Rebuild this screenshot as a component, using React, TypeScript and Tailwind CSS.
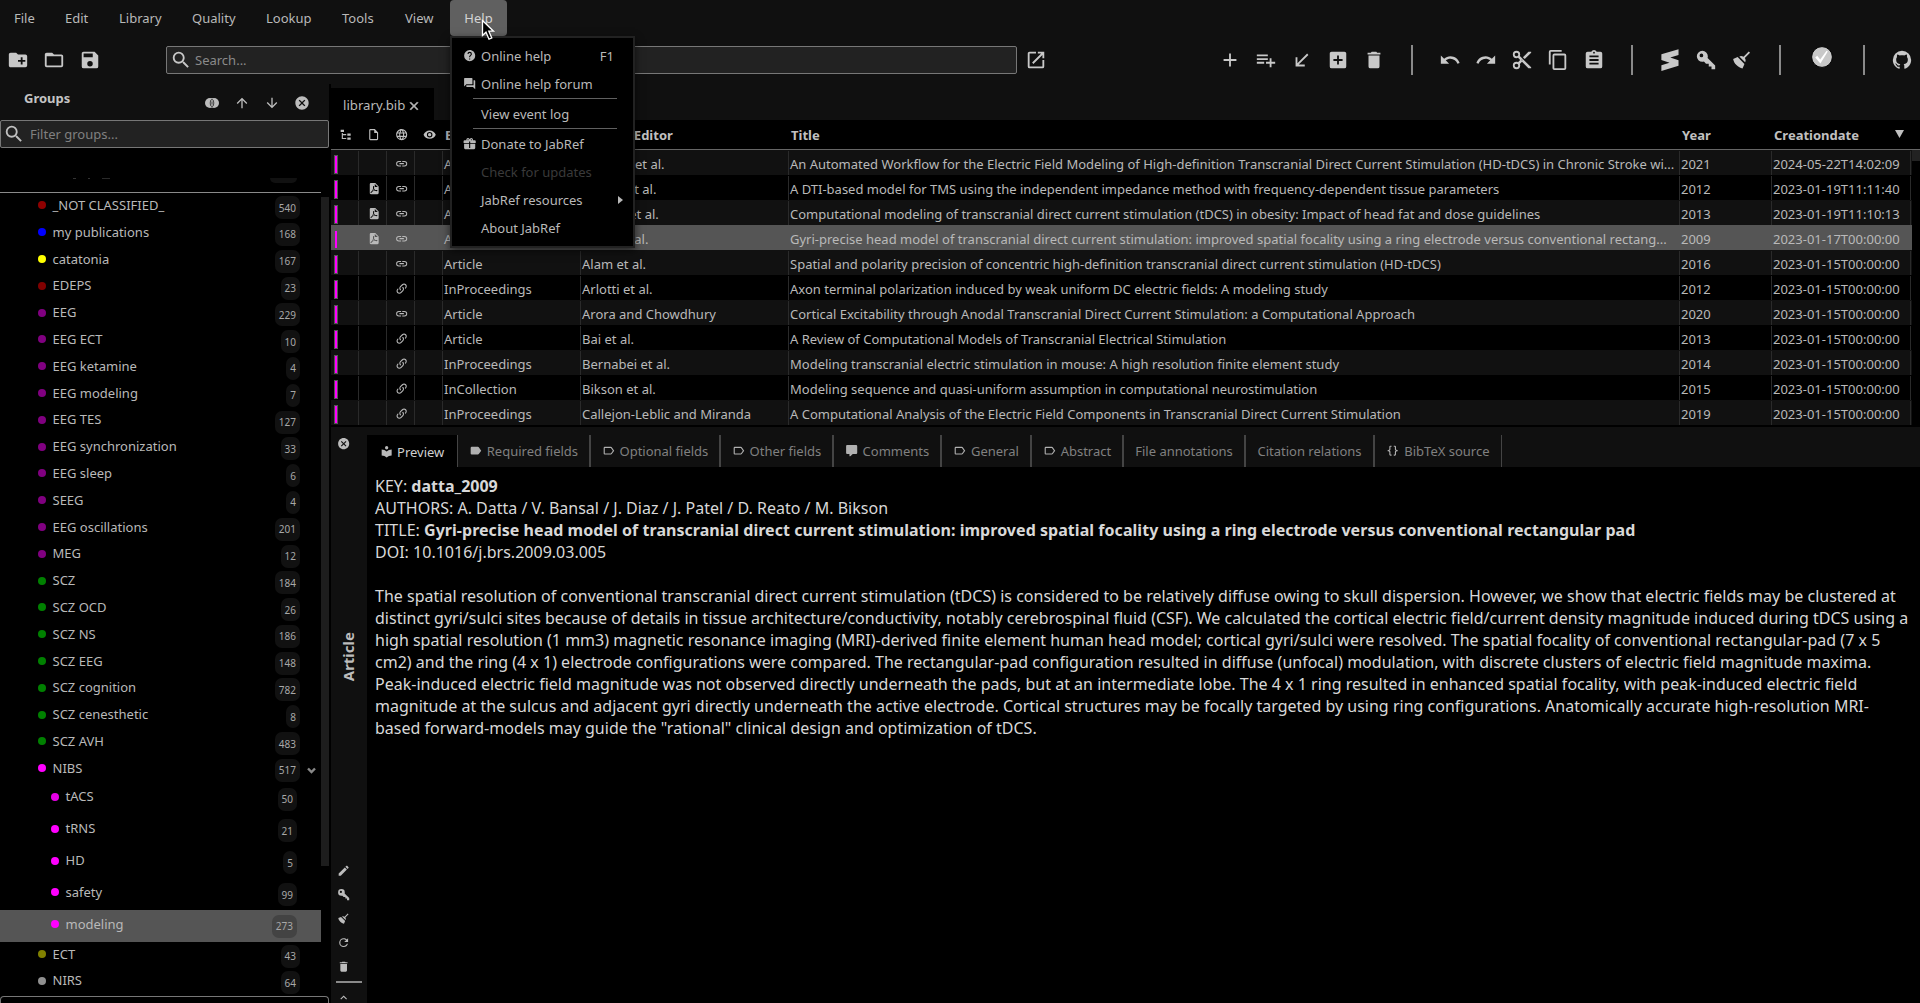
import React from "react";

const P = {
  folderPlus: "M10,4L12,6H20A2,2 0 0,1 22,8V18A2,2 0 0,1 20,20H4C2.89,20 2,19.1 2,18V6C2,4.89 2.89,4 4,4H10M15,9V12H12V14H15V17H17V14H20V12H17V9H15Z",
  folder: "M20,18H4V8H20M20,6H12L10,4H4C2.89,4 2,4.89 2,6V18A2,2 0 0,0 4,20H20A2,2 0 0,0 22,18V8C22,6.89 21.1,6 20,6Z",
  save: "M15,9H5V5H15M12,19A3,3 0 0,1 9,16A3,3 0 0,1 12,13A3,3 0 0,1 15,16A3,3 0 0,1 12,19M17,3H5C3.89,3 3,3.9 3,5V19A2,2 0 0,0 5,21H19A2,2 0 0,0 21,19V7L17,3Z",
  magnify: "M9.5,3A6.5,6.5 0 0,1 16,9.5C16,11.11 15.41,12.59 14.44,13.73L14.71,14H15.5L20.5,19L19,20.5L14,15.5V14.71L13.73,14.44C12.59,15.41 11.11,16 9.5,16A6.5,6.5 0 0,1 3,9.5A6.5,6.5 0 0,1 9.5,3M9.5,5C7,5 5,7 5,9.5C5,12 7,14 9.5,14C12,14 14,12 14,9.5C14,7 12,5 9.5,5Z",
  openNew: "M14,3V5H17.59L7.76,14.83L9.17,16.24L19,6.41V10H21V3M19,19H5V5H12V3H5C3.89,3 3,3.9 3,5V19A2,2 0 0,0 5,21H19A2,2 0 0,0 21,19V12H19V19Z",
  plus: "M19,13H13V19H11V13H5V11H11V5H13V11H19V13Z",
  playlistPlus: "M2,16H10V14H2M18,14V10H16V14H12V16H16V20H18V16H22V14M14,6H2V8H14M14,10H2V12H14V10Z",
  arrowBL: "M19,6.41L17.59,5L7,15.59V9H5V19H15V17H8.41L19,6.41Z",
  plusBox: "M17,13H13V17H11V13H7V11H11V7H13V11H17M19,3H5C3.89,3 3,3.89 3,5V19A2,2 0 0,0 5,21H19A2,2 0 0,0 21,19V5C21,3.89 20.1,3 19,3Z",
  trash: "M19,4H15.5L14.5,3H9.5L8.5,4H5V6H19M6,19A2,2 0 0,0 8,21H16A2,2 0 0,0 18,19V7H6V19Z",
  undo: "M12.5,8C9.85,8 7.45,9 5.6,10.6L2,7V16H11L7.38,12.38C8.77,11.22 10.54,10.5 12.5,10.5C16.04,10.5 19.05,12.81 20.1,16L22.47,15.22C21.08,11.03 17.15,8 12.5,8Z",
  redo: "M18.4,10.6C16.55,9 14.15,8 11.5,8C6.85,8 2.92,11.03 1.54,15.22L3.9,16C4.95,12.81 7.95,10.5 11.5,10.5C13.45,10.5 15.23,11.22 16.62,12.38L13,16H22V7L18.4,10.6Z",
  cut: "M19,3L13,9L15,11L22,4V3M12,12.5A0.5,0.5 0 0,1 11.5,12A0.5,0.5 0 0,1 12,11.5A0.5,0.5 0 0,1 12.5,12A0.5,0.5 0 0,1 12,12.5M6,20A2,2 0 0,1 4,18C4,16.89 4.9,16 6,16A2,2 0 0,1 8,18C8,19.11 7.1,20 6,20M6,8A2,2 0 0,1 4,6C4,4.89 4.9,4 6,4A2,2 0 0,1 8,6C8,7.11 7.1,8 6,8M9.64,7.64C9.87,7.14 10,6.59 10,6A4,4 0 0,0 6,2A4,4 0 0,0 2,6A4,4 0 0,0 6,10C6.59,10 7.14,9.87 7.64,9.64L10,12L7.64,14.36C7.14,14.13 6.59,14 6,14A4,4 0 0,0 2,18A4,4 0 0,0 6,22A4,4 0 0,0 10,18C10,17.41 9.87,16.86 9.64,16.36L12,14L19,21H22V20L9.64,7.64Z",
  copy: "M19,21H8V7H19M19,5H8A2,2 0 0,0 6,7V21A2,2 0 0,0 8,23H19A2,2 0 0,0 21,21V7A2,2 0 0,0 19,5M16,1H4A2,2 0 0,0 2,3V17H4V3H16V1Z",
  clipboard: "M17,9H7V7H17M17,13H7V11H17M17,17H7V15H17M12,3A1,1 0 0,1 13,4A1,1 0 0,1 12,5A1,1 0 0,1 11,4A1,1 0 0,1 12,3M19,3H14.82C14.4,1.84 13.3,1 12,1C10.7,1 9.6,1.84 9.18,3H5A2,2 0 0,0 3,5V19A2,2 0 0,0 5,21H19A2,2 0 0,0 21,19V5A2,2 0 0,0 19,3Z",
  sheets: "M21.3,0.2L2.6,5.6V11.9L11.5,15L2.6,17.6V24L21.3,18.4V12.2L12.3,9.2L21.3,6.6Z",
  key: "M22,18V22H18V19H15V16H12L9.74,13.74C9.19,13.91 8.61,14 8,14A6,6 0 0,1 2,8A6,6 0 0,1 8,2A6,6 0 0,1 14,8C14,8.61 13.91,9.19 13.74,9.74L22,18M7,5A2,2 0 0,0 5,7A2,2 0 0,0 7,9A2,2 0 0,0 9,7A2,2 0 0,0 7,5Z",
  broom: "M19.36,2.72L20.78,4.14L15.06,9.85C16.13,11.39 16.28,13.24 15.38,14.44L9.06,8.12C10.26,7.22 12.11,7.37 13.65,8.44L19.36,2.72M5.93,17.57C3.92,15.56 2.69,13.16 2.35,10.92L7.23,8.83L14.67,16.27L12.58,21.15C10.34,20.81 7.94,19.58 5.93,17.57Z",
  github: "M12,2A10,10 0 0,0 2,12C2,16.42 4.87,20.17 8.84,21.5C9.34,21.58 9.5,21.27 9.5,21C9.5,20.77 9.5,20.14 9.5,19.31C6.73,19.91 6.14,17.97 6.14,17.97C5.68,16.81 5.03,16.5 5.03,16.5C4.12,15.88 5.1,15.9 5.1,15.9C6.1,15.97 6.63,16.93 6.63,16.93C7.5,18.45 8.97,18 9.54,17.76C9.63,17.11 9.89,16.67 10.17,16.42C7.95,16.17 5.62,15.31 5.62,11.5C5.62,10.39 6,9.5 6.65,8.79C6.55,8.54 6.2,7.5 6.75,6.15C6.75,6.15 7.59,5.88 9.5,7.17C10.29,6.95 11.15,6.84 12,6.84C12.85,6.84 13.71,6.95 14.5,7.17C16.41,5.88 17.25,6.15 17.25,6.15C17.8,7.5 17.45,8.54 17.35,8.79C18,9.5 18.38,10.39 18.38,11.5C18.38,15.32 16.04,16.16 13.81,16.41C14.17,16.72 14.5,17.33 14.5,18.26C14.5,19.6 14.5,20.68 14.5,21C14.5,21.27 14.66,21.59 15.17,21.5C19.14,20.16 22,16.42 22,12A10,10 0 0,0 12,2Z",
  closeCircle: "M12,2C17.53,2 22,6.47 22,12C22,17.53 17.53,22 12,22C6.47,22 2,17.53 2,12C2,6.47 6.47,2 12,2M15.59,7L12,10.59L8.41,7L7,8.41L10.59,12L7,15.59L8.41,17L12,13.41L15.59,17L17,15.59L13.41,12L17,8.41L15.59,7Z",
  up: "M13,20H11V8L5.5,13.5L4.08,12.08L12,4.16L19.92,12.08L18.5,13.5L13,8V20Z",
  down: "M11,4H13V16L18.5,10.5L19.92,11.92L12,19.84L4.08,11.92L5.5,10.5L11,16V4Z",
  close: "M19,6.41L17.59,5L12,10.59L6.41,5L5,6.41L10.59,12L5,17.59L6.41,19L12,13.41L17.59,19L19,17.59L13.41,12L19,6.41Z",
  tree: "M3,3H9V7H3V3M15,10H21V14H15V10M15,17H21V21H15V17M13,13H7V18H13V20H5V9H7V11H13V13Z",
  file: "M14,2H6A2,2 0 0,0 4,4V20A2,2 0 0,0 6,22H18A2,2 0 0,0 20,20V8L14,2M18,20H6V4H13V9H18V20Z",
  web: "M16.36,14C16.44,13.34 16.5,12.68 16.5,12C16.5,11.32 16.44,10.66 16.36,10H19.74C19.9,10.64 20,11.31 20,12C20,12.69 19.9,13.36 19.74,14M14.59,19.56C15.19,18.45 15.65,17.25 15.97,16H18.92C17.96,17.65 16.43,18.93 14.59,19.56M14.34,14H9.66C9.56,13.34 9.5,12.68 9.5,12C9.5,11.32 9.56,10.65 9.66,10H14.34C14.43,10.65 14.5,11.32 14.5,12C14.5,12.68 14.43,13.34 14.34,14M12,19.96C11.17,18.76 10.5,17.43 10.09,16H13.91C13.5,17.43 12.83,18.76 12,19.96M8,8H5.08C6.03,6.34 7.57,5.06 9.4,4.44C8.8,5.55 8.35,6.75 8,8M5.08,16H8C8.35,17.25 8.8,18.45 9.4,19.56C7.57,18.93 6.03,17.65 5.08,16M4.26,14C4.1,13.36 4,12.69 4,12C4,11.31 4.1,10.64 4.26,10H7.64C7.56,10.66 7.5,11.32 7.5,12C7.5,12.68 7.56,13.34 7.64,14M12,4.03C12.83,5.23 13.5,6.57 13.91,8H10.09C10.5,6.57 11.17,5.23 12,4.03M18.92,8H15.97C15.65,6.75 15.19,5.55 14.59,4.44C16.43,5.07 17.96,6.34 18.92,8M12,2C6.47,2 2,6.5 2,12A10,10 0 0,0 12,22A10,10 0 0,0 22,12A10,10 0 0,0 12,2Z",
  eye: "M12,9A3,3 0 0,0 9,12A3,3 0 0,0 12,15A3,3 0 0,0 15,12A3,3 0 0,0 12,9M12,17A5,5 0 0,1 7,12A5,5 0 0,1 12,7A5,5 0 0,1 17,12A5,5 0 0,1 12,17M12,4.5C7,4.5 2.73,7.61 1,12C2.73,16.39 7,19.5 12,19.5C17,19.5 21.27,16.39 23,12C21.27,7.61 17,4.5 12,4.5Z",
  linkVariant: "M10.59,13.41C11,13.8 11,14.44 10.59,14.83C10.2,15.22 9.56,15.22 9.17,14.83C7.22,12.88 7.22,9.71 9.17,7.76V7.76L12.71,4.22C14.66,2.27 17.83,2.27 19.78,4.22C21.73,6.17 21.73,9.34 19.78,11.29L18.29,12.78C18.3,11.96 18.17,11.14 17.89,10.36L18.36,9.88C19.54,8.71 19.54,6.81 18.36,5.64C17.19,4.46 15.29,4.46 14.12,5.64L10.59,9.17C9.41,10.34 9.41,12.24 10.59,13.41M13.41,9.17C13.8,8.78 14.44,8.78 14.83,9.17C16.78,11.12 16.78,14.29 14.83,16.24V16.24L11.29,19.78C9.34,21.73 6.17,21.73 4.22,19.78C2.27,17.83 2.27,14.66 4.22,12.71L5.71,11.22C5.7,12.04 5.83,12.86 6.11,13.65L5.64,14.12C4.46,15.29 4.46,17.19 5.64,18.36C6.81,19.54 8.71,19.54 9.88,18.36L13.41,14.83C14.59,13.66 14.59,11.76 13.41,10.59C13,10.2 13,9.56 13.41,9.17Z",
  link: "M3.9,12C3.9,10.29 5.29,8.9 7,8.9H11V7H7A5,5 0 0,0 2,12A5,5 0 0,0 7,17H11V15.1H7C5.29,15.1 3.9,13.71 3.9,12M8,13H16V11H8V13M17,7H13V8.9H17C18.71,8.9 20.1,10.29 20.1,12C20.1,13.71 18.71,15.1 17,15.1H13V17H17A5,5 0 0,0 22,12A5,5 0 0,0 17,7Z",
  pdf: "M14,9H19.5L14,3.5V9M7,2H15L21,8V20A2,2 0 0,1 19,22H7C5.89,22 5,21.1 5,20V4A2,2 0 0,1 7,2M11.93,12.44C12.34,13.34 12.86,14.08 13.46,14.59L13.87,14.91C13,15.07 11.8,15.35 10.53,15.84V15.84L10.42,15.88L10.92,14.84C11.37,13.97 11.7,13.18 11.93,12.44M18.41,16.25C18.59,16.07 18.68,15.84 18.69,15.59C18.72,15.39 18.67,15.2 18.57,15.04C18.28,14.57 17.53,14.35 16.29,14.35L15,14.42L14.13,13.84C13.5,13.32 12.93,12.41 12.53,11.28L12.57,11.14C12.9,9.81 13.21,8.2 12.55,7.54C12.39,7.38 12.17,7.3 11.94,7.3H11.7C11.33,7.3 11,7.69 10.91,8.07C10.54,9.4 10.76,10.13 11.13,11.34V11.35C10.88,12.23 10.56,13.25 10.05,14.28L9.09,16.08L8.2,16.57C7,17.32 6.43,18.16 6.32,18.69C6.28,18.88 6.3,19.05 6.37,19.23L6.4,19.28L6.88,19.59L7.32,19.7C8.13,19.7 9.05,18.75 10.29,16.63L10.47,16.56C11.5,16.23 12.78,16 14.5,15.81C15.53,16.32 16.74,16.55 17.5,16.55C17.94,16.55 18.24,16.44 18.41,16.25Z",
  help: "M15.07,11.25L14.17,12.17C13.45,12.89 13,13.5 13,15H11V14.5C11,13.39 11.45,12.39 12.17,11.67L13.41,10.41C13.78,10.05 14,9.55 14,9C14,7.89 13.1,7 12,7A2,2 0 0,0 10,9H8A4,4 0 0,1 12,5A4,4 0 0,1 16,9C16,9.88 15.64,10.67 15.07,11.25M13,19H11V17H13M12,2A10,10 0 0,0 2,12A10,10 0 0,0 12,22A10,10 0 0,0 22,12C22,6.47 17.5,2 12,2Z",
  forum: "M17,12V3A1,1 0 0,0 16,2H3A1,1 0 0,0 2,3V17L6,13H16A1,1 0 0,0 17,12M21,6H19V15H6V17A1,1 0 0,0 7,18H18L22,22V7A1,1 0 0,0 21,6Z",
  gift: "M9.06,1.93C7.17,1.92 5.33,3.74 6.17,6H3A2,2 0 0,0 1,8V10A1,1 0 0,0 2,11H11V8H13V11H22A1,1 0 0,0 23,10V8A2,2 0 0,0 21,6H17.83C19,2.73 14.6,0.42 12.57,3.24L12,4L11.43,3.22C10.8,2.33 9.93,1.94 9.06,1.93M9,4C9.89,4 10.34,5.08 9.71,5.71C9.08,6.34 8,5.89 8,5A1,1 0 0,1 9,4M15,4C15.89,4 16.34,5.08 15.71,5.71C15.08,6.34 14,5.89 14,5A1,1 0 0,1 15,4M2,12V20A2,2 0 0,0 4,22H20A2,2 0 0,0 22,20V12H13V20H11V12H2Z",
  label: "M17.63,5.84C17.27,5.33 16.67,5 16,5H5A2,2 0 0,0 3,7V17A2,2 0 0,0 5,19H16C16.67,19 17.27,18.66 17.63,18.15L22,12L17.63,5.84Z",
  labelOutline: "M16,17H5V7H16L19.55,12M17.63,5.84C17.27,5.33 16.67,5 16,5H5A2,2 0 0,0 3,7V17A2,2 0 0,0 5,19H16C16.67,19 17.27,18.66 17.63,18.15L22,12L17.63,5.84Z",
  comment: "M9,22A1,1 0 0,1 8,21V18H4A2,2 0 0,1 2,16V4C2,2.89 2.9,2 4,2H20A2,2 0 0,1 22,4V16A2,2 0 0,1 20,18H13.9L10.2,21.71C10,21.9 9.75,22 9.5,22H9Z",
  reader: "M12,8A3,3 0 0,0 15,5A3,3 0 0,0 12,2A3,3 0 0,0 9,5A3,3 0 0,0 12,8M12,11.54C9.64,9.35 6.5,8 3,8V19C6.5,19 9.64,20.35 12,22.54C14.36,20.35 17.5,19 21,19V8C17.5,8 14.36,9.35 12,11.54Z",
  braces: "M8,3A2,2 0 0,0 6,5V9A2,2 0 0,1 4,11H3V13H4A2,2 0 0,1 6,15V19A2,2 0 0,0 8,21H10V19H8V14A2,2 0 0,0 6,12A2,2 0 0,0 8,10V5H10V3M16,3A2,2 0 0,1 18,5V9A2,2 0 0,0 20,11H21V13H20A2,2 0 0,0 18,15V19A2,2 0 0,1 16,21H14V19H16V14A2,2 0 0,1 18,12A2,2 0 0,1 16,10V5H14V3H16Z",
  pencil: "M20.71,7.04C21.1,6.65 21.1,6 20.71,5.63L18.37,3.29C18,2.9 17.35,2.9 16.96,3.29L15.12,5.12L18.87,8.87M3,17.25V21H6.75L17.81,9.93L14.06,6.18L3,17.25Z",
  refresh: "M17.65,6.35C16.2,4.9 14.21,4 12,4A8,8 0 0,0 4,12A8,8 0 0,0 12,20C15.73,20 18.84,17.45 19.73,14H17.65C16.83,16.33 14.61,18 12,18A6,6 0 0,1 6,12A6,6 0 0,1 12,6C13.66,6 15.14,6.69 16.22,7.78L13,11H20V4L17.65,6.35Z",
  chevronUp: "M7.41,15.41L12,10.83L16.59,15.41L18,14L12,8L6,14L7.41,15.41Z",
};

type IconName = keyof typeof P;

function Icon({ n, s = 22, className = "" }: { n: IconName; s?: number; className?: string }) {
  return (
    <svg width={s} height={s} viewBox="0 0 24 24" className={"shrink-0 fill-current " + className}>
      <path d={P[n]} />
    </svg>
  );
}

const menus: { t: string; w: string }[] = [
  { t: "File", w: "w-[51px]" },
  { t: "Edit", w: "w-[54px]" },
  { t: "Library", w: "w-[73px]" },
  { t: "Quality", w: "w-[74px]" },
  { t: "Lookup", w: "w-[76px]" },
  { t: "Tools", w: "w-[63px]" },
  { t: "View", w: "w-[59px]" },
];

function MenuBar() {
  return (
    <nav className="flex h-9 shrink-0 text-[#b9b9b9]">
      {menus.map((m) => (
        <div key={m.t} className={"flex h-9 items-center pl-3.5 " + m.w}>{m.t}</div>
      ))}
      <div className="relative flex h-9 w-[57px] items-center justify-center rounded-[4px] bg-[#606060] text-[#d4d4d4]">
        Help
        <HelpMenu />
        <svg width="15" height="22" viewBox="0 0 15 22" className="absolute top-[19px] left-[31px] z-20">
          <path d="M1.5 1.5V16.5L5 13.2L8 20.2L10.8 19L7.8 12.2H12.5Z" fill="#000" stroke="#fff" strokeWidth="1.3" />
        </svg>
      </div>
    </nav>
  );
}

function MenuRow({ icon, label, extra, disabled }: { icon?: IconName; label: string; extra?: React.ReactNode; disabled?: boolean }) {
  return (
    <div className={"flex h-7 items-center " + (disabled ? "text-[#3a3a3a]" : "text-[#b9b9b9]")}>
      <span className="flex w-[29px] justify-end pr-[5px]">{icon && <Icon n={icon} s={13.33} />}</span>
      <span className="flex-1 whitespace-nowrap">{label}</span>
      {extra}
    </div>
  );
}

function HelpMenu() {
  const sep = <div className="mr-[16px] ml-[21px] flex h-[2px]"><div className="h-px w-full bg-[#606060]" /></div>;
  return (
    <div className="absolute top-9 left-0 z-10 h-[212px] w-[185px] border-2 border-[#222] bg-black pt-1 shadow-[0_3px_8px_rgba(0,0,0,0.6)]">
      <MenuRow icon="help" label="Online help" extra={<span className="mr-[19px]">F1</span>} />
      <MenuRow icon="forum" label="Online help forum" />
      {sep}
      <MenuRow label="View event log" />
      {sep}
      <MenuRow icon="gift" label="Donate to JabRef" />
      <MenuRow label="Check for updates" disabled />
      <MenuRow
        label="JabRef resources"
        extra={<svg width="5" height="8" viewBox="0 0 5 8" className="mr-[10px] fill-current"><path d="M0 0L5 4L0 8Z" /></svg>}
      />
      <MenuRow label="About JabRef" />
    </div>
  );
}

function Cell({ children }: { children: React.ReactNode }) {
  return <div className="flex w-9 shrink-0 justify-center">{children}</div>;
}

function Divider() {
  return <div className="h-[30px] w-[2px] shrink-0 bg-[#8a8a8a]" />;
}

function Toolbar() {
  return (
    <div className="flex h-12 shrink-0 items-center text-[#c8c8c8]">
      <Cell><Icon n="folderPlus" /></Cell>
      <Cell><Icon n="folder" /></Cell>
      <Cell><Icon n="save" /></Cell>
      <div className="ml-[58px] flex h-7 w-[852px] items-center rounded-[2px] border border-[#777] bg-[#222] pl-[3px]">
        <Icon n="magnify" />
        <span className="ml-[3px] text-[#8a8a8a]">Search...</span>
      </div>
      <div className="ml-px flex w-9 justify-center"><Icon n="openNew" /></div>
      <div className="ml-[158px] flex items-center">
        <Cell><Icon n="plus" /></Cell>
        <Cell><Icon n="playlistPlus" /></Cell>
        <Cell><Icon n="arrowBL" /></Cell>
        <Cell><Icon n="plusBox" /></Cell>
        <Cell><Icon n="trash" /></Cell>
      </div>
      <div className="ml-[19px]"><Divider /></div>
      <div className="ml-[19px] flex items-center">
        <Cell><Icon n="undo" /></Cell>
        <Cell><Icon n="redo" /></Cell>
        <Cell><Icon n="cut" /></Cell>
        <Cell><Icon n="copy" /></Cell>
        <Cell><Icon n="clipboard" /></Cell>
      </div>
      <div className="ml-[19px]"><Divider /></div>
      <div className="ml-[19px] flex items-center">
        <Cell><Icon n="sheets" /></Cell>
        <Cell><Icon n="key" /></Cell>
        <Cell><Icon n="broom" /></Cell>
      </div>
      <div className="ml-[19px]"><Divider /></div>
      <div className="ml-[30px] mb-[6px]">
        <svg width="22" height="22" viewBox="0 0 22 22">
          <circle cx="11" cy="11" r="10.4" fill="#c8c8c8" stroke="#000" />
          <path d="M4.2 11.6L6.2 9.8L9.2 13.4L15.6 4.8L16.8 5.6L9.4 17.4Z" fill="#fff" />
        </svg>
      </div>
      <div className="ml-[30px]"><Divider /></div>
      <div className="ml-[19px]"><Cell><Icon n="github" /></Cell></div>
    </div>
  );
}

type G = { n: string; c: string; dot: string };
const red = "bg-[#8f0000]", purple = "bg-[#800080]", green = "bg-[#008000]", mag = "bg-[#ff00ff]";
const groups: G[] = [
  { n: "_NOT CLASSIFIED_", c: "540", dot: red },
  { n: "my publications", c: "168", dot: "bg-[#0000ff]" },
  { n: "catatonia", c: "167", dot: "bg-[#ffff00]" },
  { n: "EDEPS", c: "23", dot: "bg-[#800000]" },
  { n: "EEG", c: "229", dot: purple },
  { n: "EEG ECT", c: "10", dot: purple },
  { n: "EEG ketamine", c: "4", dot: purple },
  { n: "EEG modeling", c: "7", dot: purple },
  { n: "EEG TES", c: "127", dot: purple },
  { n: "EEG synchronization", c: "33", dot: purple },
  { n: "EEG sleep", c: "6", dot: purple },
  { n: "SEEG", c: "4", dot: purple },
  { n: "EEG oscillations", c: "201", dot: purple },
  { n: "MEG", c: "12", dot: purple },
  { n: "SCZ", c: "184", dot: green },
  { n: "SCZ OCD", c: "26", dot: green },
  { n: "SCZ NS", c: "186", dot: green },
  { n: "SCZ EEG", c: "148", dot: green },
  { n: "SCZ cognition", c: "782", dot: green },
  { n: "SCZ cenesthetic", c: "8", dot: green },
  { n: "SCZ AVH", c: "483", dot: green },
  { n: "NIBS", c: "517", dot: mag },
];
const children: G[] = [
  { n: "tACS", c: "50", dot: "bg-[#e600e6]" },
  { n: "tRNS", c: "21", dot: mag },
  { n: "HD", c: "5", dot: mag },
  { n: "safety", c: "99", dot: mag },
  { n: "modeling", c: "273", dot: mag },
];
const tail: G[] = [
  { n: "ECT", c: "43", dot: "bg-[#808000]" },
  { n: "NIRS", c: "64", dot: "bg-[#909090]" },
];

function GroupRow({ g, child, selected }: { g: G; child?: boolean; selected?: boolean }) {
  return (
    <div
      className={
        "flex shrink-0 items-center " +
        (child ? "h-[31.8px] pl-[50.5px] pr-6 " : "h-[26.8px] pl-[37.5px] pr-[21px] ") +
        (selected ? "bg-[#555]" : "")
      }
    >
      <span className={"size-2 shrink-0 rounded-full " + (child ? "mb-[3px] " : "mb-[2px] ") + g.dot} />
      <span className={"ml-[7px] flex-1 whitespace-nowrap text-[#b9b9b9] " + (child ? "mb-[4px]" : "mb-[2.6px]")}>{g.n}</span>
      <span className={"flex h-[23px] items-center rounded-[7px] px-1 text-[10px] text-[#a8a8a8] " + (child ? "mt-[1.5px] " : "mt-[2.5px] ") + (selected ? "bg-[#434343]" : "bg-[#111]")}>{g.c}</span>
      {g.n === "NIBS" && (
        <svg width="9" height="7" viewBox="0 0 9 7" className="mt-[3px] mr-[-16px] ml-[7px]"><path d="M1 1.5L4.5 5L8 1.5" fill="none" stroke="#888" strokeWidth="2.4" /></svg>
      )}
    </div>
  );
}

function GroupsPanel() {
  return (
    <aside className="flex w-[329px] shrink-0 flex-col">
      <div className="flex h-9 shrink-0 items-center pl-6">
        <span className="mb-[9px] w-[173px] font-bold text-[#c4c4c4]">Groups</span>
        <div className="mt-[2px] flex text-[#bcbcbc]">
          <div className="flex w-[30px] items-center justify-center">
            <svg width="14" height="10" viewBox="0 0 14 10">
              <circle cx="5" cy="5" r="5" fill="#bcbcbc" />
              <circle cx="9" cy="5" r="5" fill="#bcbcbc" />
              <ellipse cx="7" cy="5" rx="1.8" ry="3.6" fill="none" stroke="#222" strokeWidth="0.8" />
              <path d="M7 3.4V6.6" stroke="#222" strokeWidth="0.8" />
            </svg>
          </div>
          <div className="flex w-[30px] justify-center"><Icon n="up" s={16} /></div>
          <div className="flex w-[30px] justify-center"><Icon n="down" s={16} /></div>
          <div className="flex w-[30px] justify-center"><Icon n="closeCircle" s={16} /></div>
        </div>
      </div>
      <div className="flex h-7 shrink-0 items-center rounded-[2px] border border-[#777] bg-[#222] pl-[2px]">
        <Icon n="magnify" className="text-[#c0c0c0]" />
        <span className="ml-[5px] text-[#808080]">Filter groups...</span>
      </div>
      <div className="flex min-h-0 flex-1 bg-black">
        <div className="flex w-[321px] flex-col">
          <div className="flex h-[45px] shrink-0 flex-col justify-start border-b border-[#8a8a8a] pt-[30px]">
            <div className="flex justify-between pr-6 pl-[73px]">
              <div className="flex gap-3">
                <div className="h-px w-[3px] bg-[#333]" />
                <div className="h-px w-[2px] bg-[#333]" />
                <div className="h-px w-[8px] bg-[#2a2a2a]" />
              </div>
              <div className="h-[5px] w-[27px] rounded-b-[7px] bg-[#111]" />
            </div>
          </div>
          {groups.map((g) => <GroupRow key={g.n} g={g} />)}
          {children.map((g) => <GroupRow key={g.n} g={g} child selected={g.n === "modeling"} />)}
          {tail.map((g) => <GroupRow key={g.n} g={g} />)}
        </div>
        <div className="flex w-2 flex-col pt-[49px]"><div className="h-[669px] bg-[#1d1d1d]" /></div>
      </div>
      <div className="h-[7px] shrink-0 bg-black"><div className="h-[7px] rounded-t-[4px] border border-b-0 border-[#777]" /></div>
    </aside>
  );
}

const COLS = "grid grid-cols-[28px_28px_28px_28px_138px_208px_891px_92px_139px]";

type Row = { pdf?: boolean; v?: boolean; type: string; author: string; title: string; year: string; date: string };
const D = "2023-01-15T00:00:00";
const rows: Row[] = [
  { type: "Article", author: "Johnson et al.", title: "An Automated Workflow for the Electric Field Modeling of High-definition Transcranial Direct Current Stimulation (HD-tDCS) in Chronic Stroke wi...", year: "2021", date: "2024-05-22T14:02:09" },
  { pdf: true, type: "Article", author: "Geeter et al.", title: "A DTI-based model for TMS using the independent impedance method with frequency-dependent tissue parameters", year: "2012", date: "2023-01-19T11:11:40" },
  { pdf: true, type: "Article", author: "Truong et al.", title: "Computational modeling of transcranial direct current stimulation (tDCS) in obesity: Impact of head fat and dose guidelines", year: "2013", date: "2023-01-19T11:10:13" },
  { pdf: true, type: "Article", author: "Datta et al.", title: "Gyri-precise head model of transcranial direct current stimulation: improved spatial focality using a ring electrode versus conventional rectang...", year: "2009", date: "2023-01-17T00:00:00" },
  { type: "Article", author: "Alam et al.", title: "Spatial and polarity precision of concentric high-definition transcranial direct current stimulation (HD-tDCS)", year: "2016", date: D },
  { v: true, type: "InProceedings", author: "Arlotti et al.", title: "Axon terminal polarization induced by weak uniform DC electric fields: A modeling study", year: "2012", date: D },
  { type: "Article", author: "Arora and Chowdhury", title: "Cortical Excitability through Anodal Transcranial Direct Current Stimulation: a Computational Approach", year: "2020", date: D },
  { v: true, type: "Article", author: "Bai et al.", title: "A Review of Computational Models of Transcranial Electrical Stimulation", year: "2013", date: D },
  { v: true, type: "InProceedings", author: "Bernabei et al.", title: "Modeling transcranial electric stimulation in mouse: A high resolution finite element study", year: "2014", date: D },
  { v: true, type: "InCollection", author: "Bikson et al.", title: "Modeling sequence and quasi-uniform assumption in computational neurostimulation", year: "2015", date: D },
  { v: true, type: "InProceedings", author: "Callejon-Leblic and Miranda", title: "A Computational Analysis of the Electric Field Components in Transcranial Direct Current Stimulation", year: "2019", date: D },
];

function TableRow({ r, i }: { r: Row; i: number }) {
  const sel = i === 3;
  const cell = "mt-px flex h-6 items-center whitespace-nowrap border-r " + (sel ? "border-[#555] " : "border-[#2a2a2a] ");
  return (
    <div className={COLS + " h-[25px] w-[1581px] text-[#b9b9b9] " + (sel ? "bg-[#555]" : i % 2 ? "bg-black" : "bg-[#111]")}>
      <div className={cell + "pl-[3px]"}><div className="mt-[2px] h-[19px] w-1 border border-[#555] bg-[#ff00ff]" /></div>
      <div className={cell + "justify-center pl-[2px]"}>{r.pdf && <Icon n="pdf" s={13.33} className="mt-[2px]" />}</div>
      <div className={cell + "justify-center pl-[2px]"}><Icon n={r.v ? "linkVariant" : "link"} s={13.33} className="mt-[2px]" /></div>
      <div className={cell} />
      <div className={cell + "pl-px"}><span className="mt-px">{r.type}</span></div>
      <div className={cell + "pl-px"}><span className="mt-px">{r.author}</span></div>
      <div className={cell + "pl-px"}><span className="mt-px">{r.title}</span></div>
      <div className={cell + "pl-px"}><span className="mt-px">{r.year}</span></div>
      <div className={cell + "pl-px"}><span className="mt-px">{r.date}</span></div>
    </div>
  );
}

function EntryTable() {
  return (
    <section className="shrink-0">
      <div className="flex h-10 items-end">
        <div className="flex h-8 w-[103px] items-center bg-black pl-3 text-[13.2px] text-[#b9b9b9]">
          <span className="mt-[2px] w-[62px]">library.bib</span>
          <Icon n="close" s={14} className="mt-[3px] ml-[2px] stroke-current stroke-1" />
        </div>
      </div>
      <div className={COLS + " h-[30px] border-b border-[#666] bg-black font-bold text-[#c0c0c0]"}>
        <div className="flex items-center justify-center pl-[2px]"><Icon n="tree" s={13.33} /></div>
        <div className="flex items-center justify-center pl-px"><Icon n="file" s={13.33} /></div>
        <div className="flex items-center justify-center pl-px"><Icon n="web" s={13.33} /></div>
        <div className="flex items-center justify-center pl-px"><Icon n="eye" s={13.33} /></div>
        <div className="flex items-center pl-[2px]">Entrytype</div>
        <div className="flex items-center pl-[2px]">Author/Editor</div>
        <div className="flex items-center pl-[2px]">Title</div>
        <div className="flex items-center pl-[2px]">Year</div>
        <div className="flex items-center justify-between pr-[7px] pl-[2px]">
          Creationdate
          <svg width="9" height="8" viewBox="0 0 9 8" className="mb-[2px] fill-current"><path d="M0 0H9L4.5 8Z" /></svg>
        </div>
      </div>
      <div className="flex bg-black pb-[2px]">
        <div>{rows.map((r, i) => <TableRow key={i} r={r} i={i} />)}</div>
        <div className="h-[11px] w-2 bg-[#222]" />
      </div>
    </section>
  );
}

const tabs: { t: string; icon?: IconName; w: string }[] = [
  { t: "Required fields", icon: "label", w: "w-[133px]" },
  { t: "Optional fields", icon: "labelOutline", w: "w-[130px]" },
  { t: "Other fields", icon: "labelOutline", w: "w-[113px]" },
  { t: "Comments", icon: "comment", w: "w-[108px]" },
  { t: "General", icon: "labelOutline", w: "w-[90px]" },
  { t: "Abstract", icon: "labelOutline", w: "w-[92px]" },
  { t: "File annotations", w: "w-[122px]" },
  { t: "Citation relations", w: "w-[129px]" },
  { t: "BibTeX source", icon: "braces", w: "w-[127px]" },
];

function EntryEditor() {
  return (
    <section className="flex min-h-0 flex-1">
      <div className="flex w-9 shrink-0 flex-col text-[#bcbcbc]">
        <div className="mt-[10px] ml-[6px]"><Icon n="closeCircle" s={13.33} /></div>
        <div className="flex flex-1 items-start justify-center pt-[182px] pr-[2px]">
          <span className="rotate-180 text-[15px] leading-[20px] font-bold [writing-mode:vertical-rl]">Article</span>
        </div>
        <div className="mb-[8px] ml-[6px] flex flex-col gap-[10.67px]">
          <Icon n="pencil" s={13.33} />
          <Icon n="key" s={13.33} />
          <Icon n="broom" s={13.33} />
          <Icon n="refresh" s={13.33} />
          <Icon n="trash" s={13.33} />
        </div>
        <div className="ml-[5px] h-[2px] w-[26px] shrink-0 bg-[#8a8a8a]" />
        <div className="ml-[6px] h-5 overflow-hidden pt-[8px]"><Icon n="chevronUp" s={13.33} /></div>
      </div>
      <div className="flex flex-1 flex-col">
        <div className="flex h-10 items-end text-[#808080]">
          <div className="flex h-8 w-[91px] items-center justify-center gap-[4px] border-r border-[#444] bg-black text-[#cfcfcf]">
            <Icon n="reader" s={13.33} className="mt-px text-[#b9b9b9]" />
            <span className="mt-[2px]">Preview</span>
          </div>
          {tabs.map((t) => (
            <div key={t.t} className={"flex h-8 items-center justify-center gap-[4.5px] border-r-2 border-[#444] whitespace-nowrap last:border-r " + t.w}>
              {t.icon && <Icon n={t.icon} s={13.33} className="text-[#b0b0b0]" />}
              <span>{t.t}</span>
            </div>
          ))}
        </div>
        <div className="flex-1 bg-black pt-[8px] pl-2 text-[16px] leading-[22px] tracking-[0.007px] whitespace-nowrap text-[#d8d8d8]">
          <div>KEY: <b>datta_2009</b></div>
          <div>AUTHORS: A. Datta / V. Bansal / J. Diaz / J. Patel / D. Reato / M. Bikson</div>
          <div>TITLE: <b className="tracking-[0.042px]">Gyri-precise head model of transcranial direct current stimulation: improved spatial focality using a ring electrode versus conventional rectangular pad</b></div>
          <div>DOI: 10.1016/j.brs.2009.03.005</div>
          <div className="mt-[22px]">The spatial resolution of conventional transcranial direct current stimulation (tDCS) is considered to be relatively diffuse owing to skull dispersion. However, we show that electric fields may be clustered at</div>
          <div>distinct gyri/sulci sites because of details in tissue architecture/conductivity, notably cerebrospinal fluid (CSF). We calculated the cortical electric field/current density magnitude induced during tDCS using a</div>
          <div>high spatial resolution (1 mm3) magnetic resonance imaging (MRI)-derived finite element human head model; cortical gyri/sulci were resolved. The spatial focality of conventional rectangular-pad (7 x 5</div>
          <div>cm2) and the ring (4 x 1) electrode configurations were compared. The rectangular-pad configuration resulted in diffuse (unfocal) modulation, with discrete clusters of electric field magnitude maxima.</div>
          <div>Peak-induced electric field magnitude was not observed directly underneath the pads, but at an intermediate lobe. The 4 x 1 ring resulted in enhanced spatial focality, with peak-induced electric field</div>
          <div>magnitude at the sulcus and adjacent gyri directly underneath the active electrode. Cortical structures may be focally targeted by using ring configurations. Anatomically accurate high-resolution MRI-</div>
          <div>based forward-models may guide the "rational" clinical design and optimization of tDCS.</div>
        </div>
      </div>
    </section>
  );
}

export default function App() {
  return (
    <div className="flex h-[1003px] w-[1920px] flex-col overflow-hidden bg-[#101010] font-['Noto_Sans',sans-serif] text-[13px] leading-[18px]">
      <MenuBar />
      <Toolbar />
      <div className="flex min-h-0 flex-1">
        <GroupsPanel />
        <div className="w-[2px] shrink-0 bg-black" />
        <main className="-mt-1 flex min-w-0 flex-1 flex-col">
          <EntryTable />
          <EntryEditor />
        </main>
      </div>
    </div>
  );
}
